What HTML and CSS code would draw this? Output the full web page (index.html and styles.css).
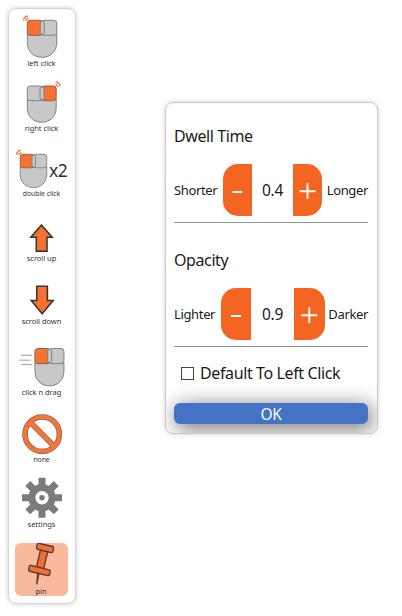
FILE: index.html
```html
<!DOCTYPE html>
<html lang="en">
<head>
<meta charset="utf-8">
<title>Dwell clicker</title>
<link rel="stylesheet" href="styles.css">
</head>
<body>
<svg class="defs" width="0" height="0" aria-hidden="true">
  <defs>
    <g id="mouse-body">
      <path class="shell" d="M0 13.5H29.5V22C29.5 31.5 23 37 14.75 37S0 31.5 0 22Z"/>
    </g>
    <g id="mouse-left">
      <use href="#mouse-body"/>
      <rect class="shell" x="14" width="15.5" height="15" rx="3"/>
      <rect class="hot" width="15.5" height="15" rx="3"/>
      <rect class="shell" x="13" y=".8" width="4" height="13.4" rx="2"/>
    </g>
    <g id="mouse-right">
      <use href="#mouse-body"/>
      <rect class="shell" width="15.5" height="15" rx="3"/>
      <rect class="hot" x="14" width="15.5" height="15" rx="3"/>
      <rect class="shell" x="13" y=".8" width="4" height="13.4" rx="2"/>
    </g>
    <g id="waves" class="waves">
      <path d="M0 4.6Q.4 .6 4.6 0M2.4 5Q2.6 2.8 5 2.5"/>
    </g>
  </defs>
</svg>

<nav class="toolbar">
  <div class="tool left">
    <svg viewBox="9 9 66 49"><use href="#mouse-left" x="27.3" y="20.3"/><use href="#waves" x="23.4" y="16"/></svg>
    <span>left click</span>
  </div>
  <div class="tool right">
    <svg viewBox="9 68 66 55"><use href="#mouse-right" transform="translate(27.3 86) scale(.98)"/><use href="#waves" transform="translate(60.3 82) scale(-1 1)"/></svg>
    <span>right click</span>
  </div>
  <div class="tool double">
    <svg viewBox="9 133 66 55"><use href="#mouse-left" transform="translate(20.2 154.3) scale(.9)"/><use href="#waves" x="16.4" y="150.3"/><text x="49" y="176.6">x2</text></svg>
    <span>double click</span>
  </div>
  <div class="tool up">
    <svg viewBox="9 198 66 55"><path class="arrow" d="M41.5 225L52.2 237.3H47V251.2H36.3V237.3H30.8Z"/></svg>
    <span>scroll up</span>
  </div>
  <div class="tool down">
    <svg viewBox="9 263 66 53"><path class="arrow" d="M42.2 313.8L53.2 300.6H47.4V286.2H36.8V300.6H31.2Z"/></svg>
    <span>scroll down</span>
  </div>
  <div class="tool drag">
    <svg viewBox="9 326 66 61"><use href="#mouse-left" transform="translate(34.9 348.5) scale(.985 1.01)"/><path class="speed" d="M21 355.2H32M19 360.2H30.5M21 364.6H32.3"/></svg>
    <span>click n drag</span>
  </div>
  <div class="tool none">
    <svg viewBox="9 397 66 57"><g class="ban-edge"><circle cx="42.2" cy="434.2" r="17.2"/><path d="M30 422L54.4 446.4"/></g><g class="ban"><circle cx="42.2" cy="434.2" r="17.2"/><path d="M30 422L54.4 446.4"/></g></svg>
    <span>none</span>
  </div>
  <div class="tool settings">
    <svg viewBox="9 464 66 55">
      <g class="gear" transform="translate(42 497.7)">
        <circle r="10.2"/>
        <path d="M0-20V-12M0 20V12M-20 0H-12M20 0H12M-14.2-14.2L-8-8M14.2 14.2L8 8M-14.2 14.2L-8 8M14.2-14.2L8-8"/>
        <circle class="hub" r="2.7"/>
      </g>
    </svg>
    <span>settings</span>
  </div>
  <div class="tool pin">
    <svg viewBox="15 543 53 43">
      <path class="needle" d="M37.3 571L40 571.6L37.6 583.8L36.3 584.8L36.1 583.3Z"/>
      <g class="pin-parts" transform="translate(42 559.4) rotate(13.5)">
        <path d="M-3.6-9H3.8V10H-3.6Z"/>
        <rect x="-8.1" y="-15" width="16.8" height="6.2" rx="1.5"/>
        <rect x="-10.7" y="8.4" width="21.6" height="6" rx="1.5"/>
      </g>
    </svg>
    <span>pin</span>
  </div>
</nav>

<main class="dialog">
  <h2 class="dwell-title">Dwell Time</h2>
  <div class="stepper">
    <span class="low">Shorter</span>
    <button class="minus" aria-label="Shorter"><svg viewBox="0 0 29 52"><path d="M9.5 28H19"/></svg></button>
    <output>0.4</output>
    <button class="plus" aria-label="Longer"><svg viewBox="0 0 29 52"><path d="M6.5 27.2H22.5M14.5 19.3V35"/></svg></button>
    <span class="high">Longer</span>
  </div>
  <h2 class="opacity-title">Opacity</h2>
  <div class="stepper wide">
    <span class="low">Lighter</span>
    <button class="minus" aria-label="Lighter"><svg viewBox="0 0 30.5 52"><path d="M10 28H20"/></svg></button>
    <output>0.9</output>
    <button class="plus" aria-label="Darker"><svg viewBox="0 0 30.5 52"><path d="M7.3 27.2H23.3M15.3 19.3V35"/></svg></button>
    <span class="high">Darker</span>
  </div>
  <label class="default"><i class="box"></i><span>Default To Left Click</span></label>
  <button class="ok">OK</button>
</main>
</body>
</html>
```

FILE: styles.css
```css
* { box-sizing: border-box; }

body {
  margin: 0;
  padding: 8px 0 0 8px;
  height: 616px;
  display: flex;
  align-items: flex-start;
  overflow: hidden;
  background: #fff;
  color: #1a1a1a;
  font-family: "Noto Sans", "Open Sans", sans-serif;
}

.defs { position: absolute; }

.toolbar {
  width: 68px;
  height: 596px;
  border: 1px solid #d4d4d4;
  border-radius: 8px;
  box-shadow: 0 0 4px rgba(0, 0, 0, .22);
}

.tool {
  display: flex;
  flex-direction: column;
  align-items: center;
}
.tool svg { display: block; width: 66px; flex: none; }
.tool span {
  height: 10px;
  line-height: 11px;
  font-size: 7.5px;
  letter-spacing: -.03px;
  color: #333;
  white-space: nowrap;
  margin-right: 1px;
}
.left svg { height: 49px; }
.right svg, .double svg, .up svg, .settings svg { height: 55px; }
.down svg { height: 53px; }
.drag svg { height: 61px; }
.none svg { height: 57px; }
.double span { font-size: 6.8px; }
.none span { font-size: 6.8px; }

.pin {
  width: 53px;
  height: 53px;
  margin: 14px 0 0 6px;
  border-radius: 6px;
  background: #fab89c;
}
.pin svg { width: 53px; height: 43px; }

.shell { fill: #c8c8c8; stroke: #777; stroke-width: .9; }
.hot { fill: #f8722f; stroke: #7b5a4c; stroke-width: .9; }
.waves { fill: none; stroke: #f4804f; stroke-width: 1.4; }
.double text { font-size: 17.5px; letter-spacing: -.4px; fill: #333; }
.arrow { fill: #f8722f; stroke: #333; stroke-width: 1.5; }
.speed { fill: none; stroke: #888; stroke-width: .8; }
.ban-edge { fill: none; stroke: #80665a; stroke-width: 5.6; }
.ban { fill: none; stroke: #f47536; stroke-width: 4.2; }
.gear { fill: none; stroke: #7d7b7a; stroke-width: 7; }
.gear .hub { fill: #7d7b7a; stroke: none; }
.pin-parts { fill: #f46e30; stroke: #4c3b34; stroke-width: 1.3; }
.needle { fill: #4c4440; }

.dialog {
  width: 213px;
  height: 332px;
  margin: 94px 0 0 89px;
  padding: 0 9px 0 8px;
  border: 1px solid #c9c9c9;
  border-radius: 8px;
  overflow: hidden;
  box-shadow: 0 0 4px rgba(0, 0, 0, .2);
}

h2 {
  margin: 0;
  height: 24px;
  line-height: 24px;
  font-size: 16px;
  letter-spacing: -.4px;
  font-weight: 400;
}
.dwell-title { margin-top: 21px; }
.opacity-title { margin-top: 25px; }

.stepper {
  display: flex;
  align-items: center;
  height: 75px;
  padding-top: 9px;
  border-bottom: 1px solid #929292;
  font-size: 13px;
  letter-spacing: -.35px;
}
.stepper .low { width: 49px; }
.stepper .high { flex: 1; text-align: right; }
.stepper output { width: 41px; text-align: center; font-size: 15.5px; }
.stepper button {
  width: 29px;
  height: 52px;
  padding: 0;
  border: 0;
  background: #f56522;
}
.stepper .minus { border-radius: 15px 0 0 15px; }
.stepper .plus { border-radius: 0 15px 15px 0; }
.stepper button svg { display: block; width: 100%; height: 52px; }
.stepper button path { stroke: #fff; stroke-width: 1.9; fill: none; }
.wide .low { width: 46.5px; }
.wide button { width: 30.5px; }
.wide output { width: 43px; }

.default {
  display: flex;
  align-items: center;
  height: 24px;
  margin: 14px 0 0 7px;
  font-size: 16px;
  letter-spacing: -.38px;
  white-space: nowrap;
}
.box { width: 13px; height: 13px; margin-right: 6px; border: 1px solid #444; background: #fff; }

.ok {
  display: block;
  width: 194px;
  height: 21px;
  margin-top: 18px;
  padding: 0;
  border: 0;
  border-radius: 6px;
  background: #4472c4;
  box-shadow: 3px 4px 20px 2px rgba(0, 0, 0, .5);
  color: #fff;
  font: 15.5px/23px "Noto Sans", "Open Sans", sans-serif;
  letter-spacing: -.4px;
}
```
